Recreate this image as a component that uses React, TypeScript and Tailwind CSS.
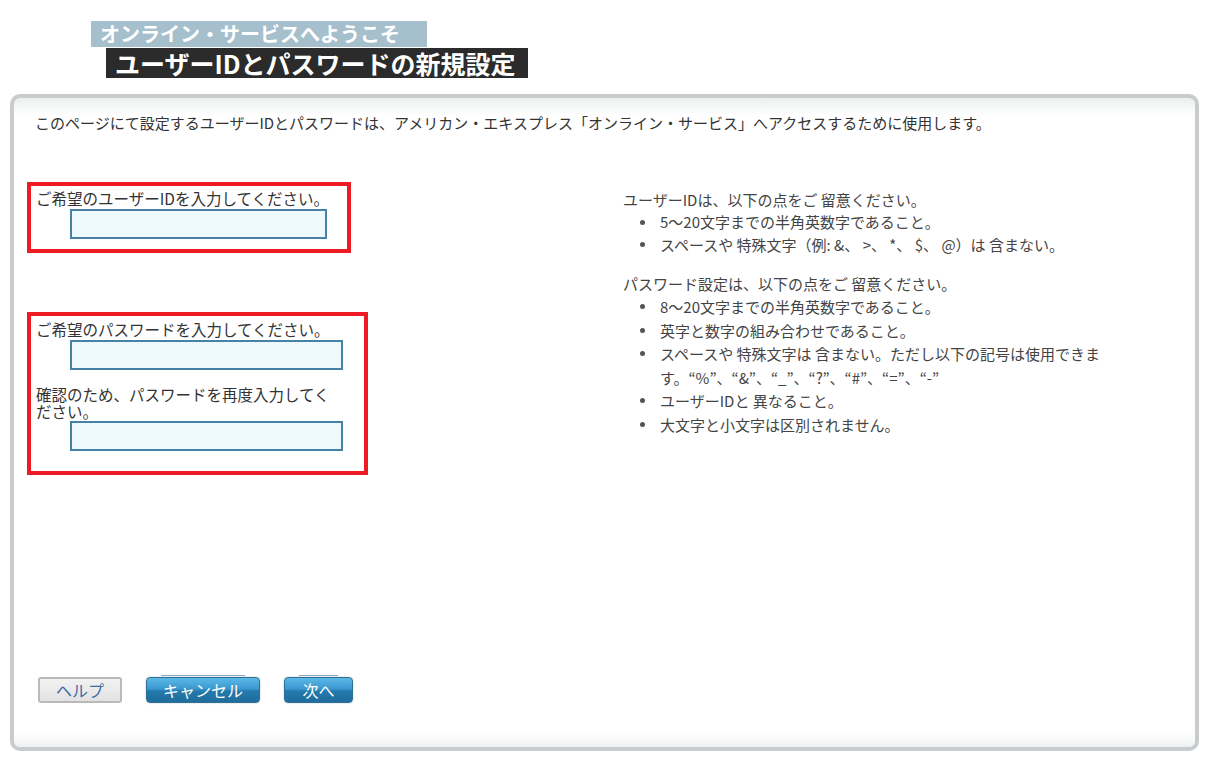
export default function App() {
  return (
    <div className="w-[1208px] h-[758px] bg-white font-['Noto_Sans_CJK_JP','Noto_Sans',sans-serif] overflow-hidden">
      {/* page title */}
      <div className="pt-[21px] pl-[91px]">
        <div className="w-[336px] h-[26px] bg-[#a6bfcc] pl-[9px] text-[20px] font-bold leading-[26px] text-white">
          オンライン・サービスへようこそ
        </div>
        <div className="ml-[15px] mt-[1px] w-[422px] h-[30px] bg-[#2b2b2b] pl-[9px] text-[25px] font-bold leading-[30px] text-white">
          ユーザーIDとパスワードの新規設定
        </div>
      </div>

      {/* panel */}
      <div className="mt-[16px] ml-[10px] w-[1189px] h-[657px] border-4 border-[#c8ccce] rounded-[10px] flex flex-col overflow-hidden bg-[linear-gradient(to_bottom,#eceeee_0px,#ffffff_18px)]">
        <p className="pl-[21px] pt-[16px] text-[15px] leading-[18px] text-[#333]">
          このページにて設定するユーザーIDとパスワードは、アメリカン・エキスプレス「オンライン・サービス」へアクセスするために使用します。
        </p>

        <div className="flex mt-[50px]">
          {/* left column: inputs */}
          <div className="ml-[13px] w-[341px]">
            <div className="w-[324px] h-[71px] border-4 border-[#ed1c24] px-[5px]">
              <label className="block pt-[4px] text-[15.5px] leading-[16px] text-[#333]">
                ご希望のユーザーIDを入力してください。
              </label>
              <input className="mt-[3px] ml-[34px] block w-[257px] h-[30px] border-2 border-[#4682a5] bg-[#eef9fd] outline-none" />
            </div>

            <div className="mt-[59px] w-[341px] h-[163px] border-4 border-[#ed1c24] px-[5px]">
              <label className="block pt-[5px] text-[15.5px] leading-[16px] text-[#333]">
                ご希望のパスワードを入力してください。
              </label>
              <input
                type="password"
                className="mt-[3px] ml-[34px] block w-[273px] h-[30px] border-2 border-[#4682a5] bg-[#eef9fd] outline-none"
              />
              <label className="block mt-[16px] text-[15.5px] leading-[17px] text-[#333]">
                確認のため、パスワードを再度入力してく
                <br />
                ださい。
              </label>
              <input
                type="password"
                className="mt-[1px] ml-[34px] block w-[273px] h-[30px] border-2 border-[#4682a5] bg-[#eef9fd] outline-none"
              />
            </div>
          </div>

          {/* right column: rules */}
          <div className="ml-[255px] pt-[7px] text-[15px] text-[#444]">
            <p className="leading-[22px]">ユーザーIDは、以下の点をご 留意ください。</p>
            <ul className="leading-[22.5px]">
              <Bullet h="h-[22.5px]">5〜20文字までの半角英数字であること。</Bullet>
              <Bullet h="h-[22.5px]">スペースや 特殊文字（例: &amp;、 &gt;、 *、 $、 @）は 含まない。</Bullet>
            </ul>

            <p className="mt-[17px] leading-[22px]">パスワード設定は、以下の点をご 留意ください。</p>
            <ul className="leading-[23.5px]">
              <Bullet h="h-[23.5px]">8〜20文字までの半角英数字であること。</Bullet>
              <Bullet h="h-[23.5px]">英字と数字の組み合わせであること。</Bullet>
              <Bullet h="h-[23.5px]">
                スペースや 特殊文字は 含まない。ただし以下の記号は使用できま
                <br />
                す。“%”、“&amp;”、“_”、“?”、“#”、“=”、“-”
              </Bullet>
              <Bullet h="h-[23.5px]">ユーザーIDと 異なること。</Bullet>
              <Bullet h="h-[23.5px]">大文字と小文字は区別されません。</Bullet>
            </ul>
          </div>
        </div>

        {/* buttons */}
        <div className="mt-auto flex items-center pl-[24px] pb-[30px]">
          <button className="w-[84px] h-[26px] rounded-[3px] border-2 border-[#b9b9b9] bg-[linear-gradient(to_bottom,#f2f2f2,#e2e2e2)] text-[16px] leading-[20px] text-[#3a6ea5]">
            ヘルプ
          </button>
          <BlueButton w="w-[114px]">キャンセル</BlueButton>
          <BlueButton w="w-[69px]">次へ</BlueButton>
        </div>
        <div className="h-[14px] bg-[linear-gradient(to_bottom,#ffffff,#eff0f0)]" />
      </div>
    </div>
  );
}

function Bullet({ children, h }: { children: React.ReactNode; h: string }) {
  return (
    <li className="flex">
      <span className={`w-[37px] shrink-0 pl-[17px] flex items-center ${h}`}>
        <span className="w-[5px] h-[5px] rounded-full bg-[#555]" />
      </span>
      <span>{children}</span>
    </li>
  );
}

function BlueButton({ children, w }: { children: React.ReactNode; w: string }) {
  return (
    <button
      className={`relative ml-[24px] ${w} h-[26px] rounded-[4px] border border-[#2c6f98] bg-[linear-gradient(to_bottom,#5cb8e6_0%,#3a98cf_45%,#2479ab_55%,#1f6d9c_100%)] shadow-[0_0_2px_rgba(0,0,0,0.25)] text-[16px] leading-[20px] text-white`}
    >
      <span className="absolute -top-[3px] left-[14px] right-[14px] h-[1px] bg-[#8ea9c3]" />
      {children}
    </button>
  );
}
